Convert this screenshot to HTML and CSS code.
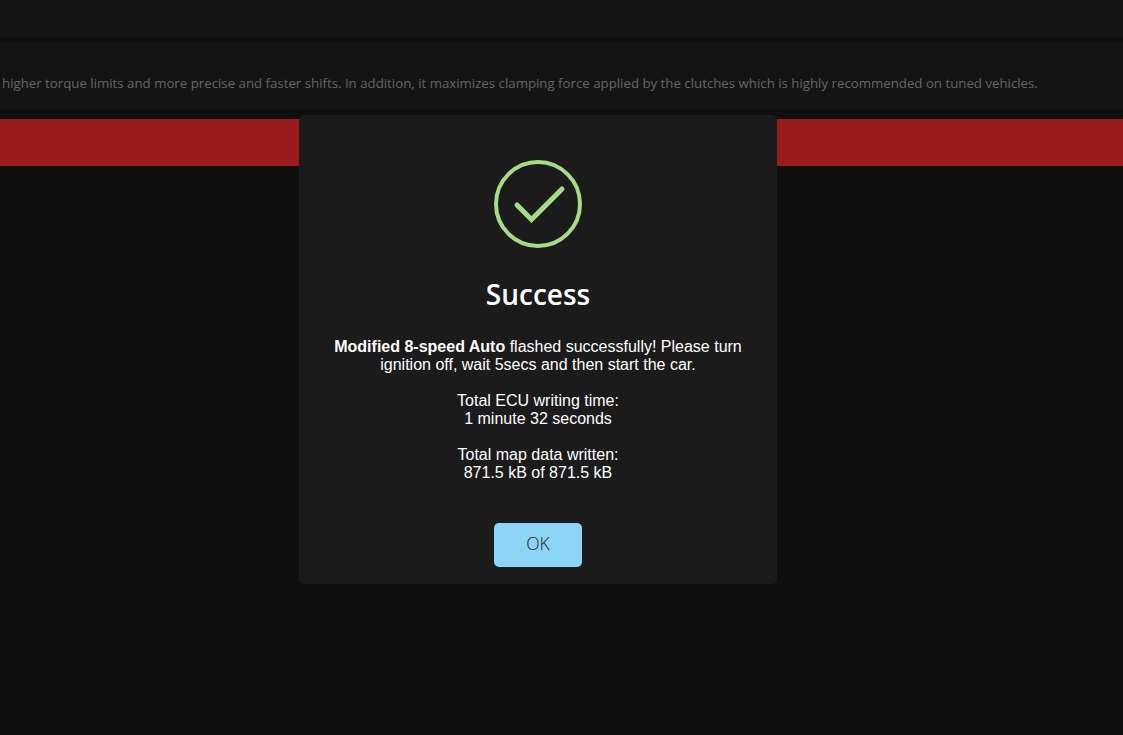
FILE: index.html
```html
<!DOCTYPE html>
<html lang="en">
<head>
    <meta charset="UTF-8">
    <meta name="viewport" content="width=device-width, initial-scale=1.0">
    <title>Flash Complete</title>
    <link rel="stylesheet" href="styles.css">
</head>
<body>
    <div class="page">
        <div class="topbar"></div>
        <div class="description">
            <p>higher torque limits and more precise and faster shifts. In addition, it maximizes clamping force applied by the clutches which is highly recommended on tuned vehicles.</p>
        </div>
        <div class="status-bar"></div>
    </div>

    <div class="modal">
        <svg class="success-icon" viewBox="0 0 88 88" width="88" height="88">
            <circle cx="44" cy="44" r="42"/>
            <path d="M23 45 L37.5 59.5 L68 29"/>
        </svg>
        <h2>Success</h2>
        <div class="message">
            <p><b>Modified 8-speed Auto</b> flashed successfully! Please turn<br>ignition off, wait 5secs and then start the car.</p>
            <p>Total ECU writing time:<br>1 minute 32 seconds</p>
            <p>Total map data written:<br>871.5 kB of 871.5 kB</p>
        </div>
        <button>OK</button>
    </div>
</body>
</html>
```

FILE: styles.css
```css
* {
    padding: 0;
    margin: 0;
    box-sizing: border-box;
}
body {
    height: 100vh;
    overflow: hidden;
    background: #0f0f0f;
    font-family: "Open Sans", "Noto Sans", sans-serif;
}
.topbar {
    height: 37px;
    margin-bottom: 4px;
    background: #141414;
}
.description {
    display: flex;
    align-items: center;
    height: 68px;
    padding: 16px 2px 0;
    margin-bottom: 10px;
    background: #141414;
    color: #666;
    font-size: 13.25px;
    white-space: nowrap;
}
.status-bar {
    height: 47px;
    background: #991b1b;
}
.modal {
    position: absolute;
    top: 115px;
    left: 299px;
    width: 478px;
    height: 469px;
    padding-top: 45px;
    display: flex;
    flex-direction: column;
    align-items: center;
    border-radius: 5px;
    background: #1b1b1b;
    color: white;
}
.success-icon {
    fill: none;
    stroke: #a5dc86;
    stroke-width: 4;
}
.success-icon path {
    stroke-width: 5;
    stroke-linecap: round;
}
h2 {
    margin-top: 26px;
    line-height: 40px;
    font-size: 28px;
    font-weight: 600;
}
.message {
    display: flex;
    flex-direction: column;
    gap: 18px;
    margin-top: 24px;
    font-family: "Liberation Sans", Arial, sans-serif;
    font-size: 16px;
    line-height: 18px;
    text-align: center;
    white-space: nowrap;
}
button {
    width: 88px;
    height: 44px;
    margin-top: 41px;
    padding-bottom: 4px;
    border: none;
    border-radius: 5px;
    background: #8cd4f5;
    color: #222;
    font-family: "Open Sans", sans-serif;
    font-size: 17.5px;
    font-weight: 300;
    cursor: pointer;
}
```
